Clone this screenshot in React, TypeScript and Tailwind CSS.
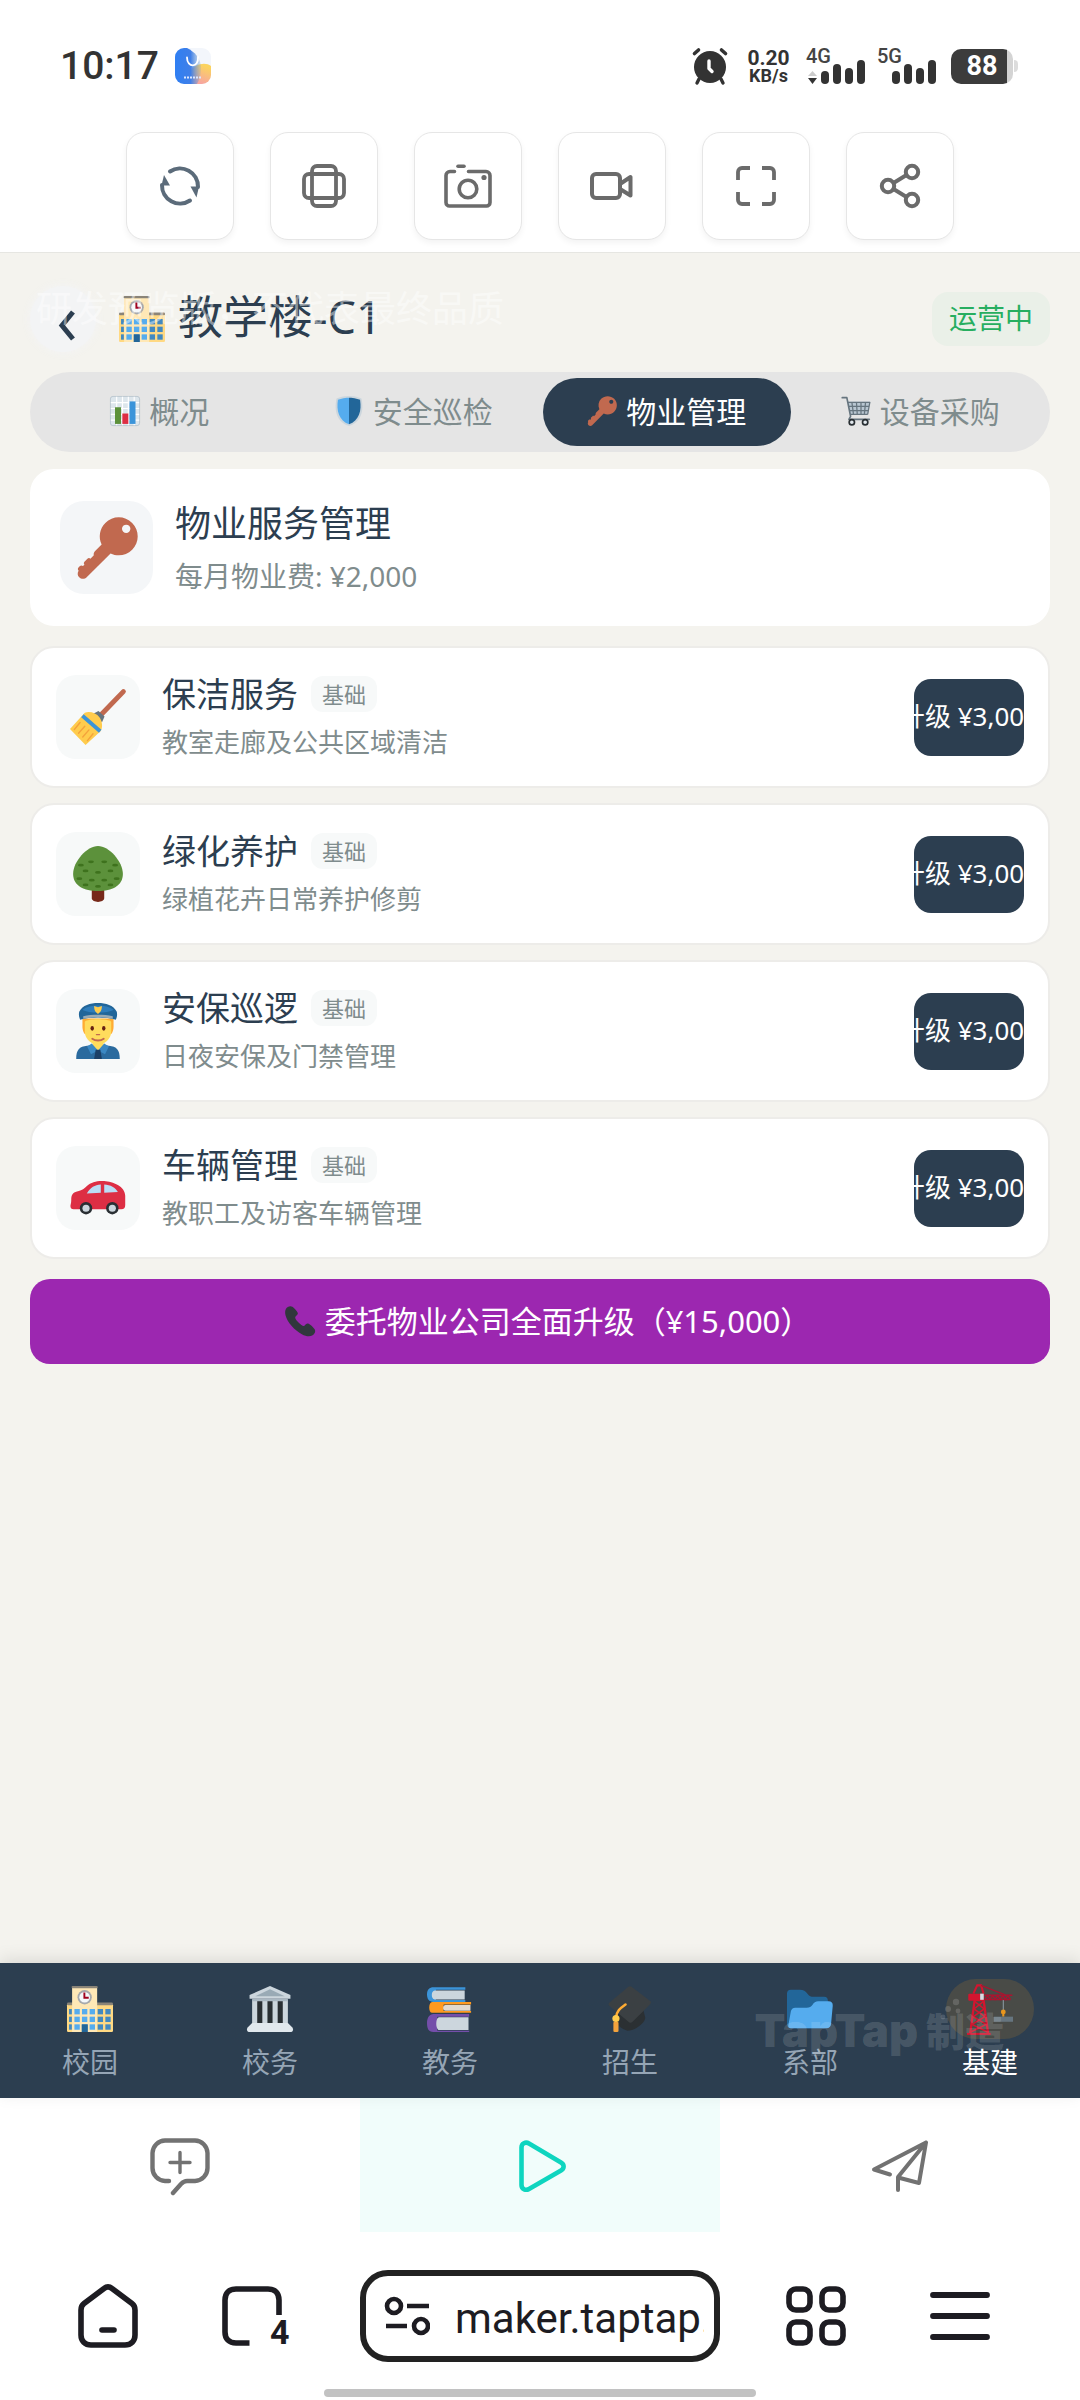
import { useState } from 'react';
import type { ReactNode } from 'react';

const ink = '#6b6b6b';

/* ---------- Emoji drawings (36 x 36 grid) ---------- */

const Emoji = ({ className, children }: { className: string; children: ReactNode }) => (
  <svg viewBox="0 0 36 36" className={`shrink-0 overflow-visible ${className}`} aria-hidden="true">
    {children}
  </svg>
);

const School = () => (
  <>
    <rect x="0" y="14" width="36" height="22" rx="1" fill="#FFD983" />
    <rect x="0" y="13" width="36" height="2" rx="1" fill="#8A8478" />
    <rect x="4" y="1" width="19.6" height="35" fill="#FFE8B6" />
    <rect x="3.6" y="0" width="20.4" height="1.8" rx=".8" fill="#8A8478" />
    <circle cx="13.8" cy="8.8" r="5.6" fill="#A7A9AC" />
    <circle cx="13.8" cy="8.8" r="4.2" fill="#F5F8FA" />
    <path d="M13.6 5v4.2H17" stroke="#A0041E" strokeWidth="1.5" fill="none" />
    {[18, 24, 30].map((y) => (
      <g key={y}>
        <rect x="1.6" y={y} width="2.2" height="4.2" fill="#4289C1" />
        <rect x="5.8" y={y} width="4.2" height="4.2" fill="#55ACEE" />
        <rect x="11.7" y={y} width="4.2" height="4.2" fill="#55ACEE" />
        <rect x="17.7" y={y} width="4.2" height="4.2" fill="#55ACEE" />
        <rect x="24" y={y} width="4.2" height="4.2" fill="#4289C1" />
        <rect x="30" y={y} width="4.2" height="4.2" fill="#4289C1" />
      </g>
    ))}
    <rect x="11.5" y="30" width="4.8" height="6" fill="#226699" />
  </>
);

const Chart = () => (
  <>
    <rect x=".5" y=".5" width="35" height="35" rx="3" fill="#DDE6EC" stroke="#B5C2CB" />
    <path d="M1 8h34M1 15h34M1 22h34M1 29h34M8 1v34M15 1v34M22 1v34M29 1v34" stroke="#fff" strokeWidth="1.4" />
    <rect x="6" y="13.5" width="7.2" height="20" fill="#5C913B" />
    <rect x="14.8" y="21" width="7.2" height="12.5" fill="#DD2E44" />
    <rect x="23.4" y="6.5" width="7.2" height="27" fill="#3B94D9" />
  </>
);

const Shield = () => (
  <>
    <path d="M33 3c-7-3-15-3-15-3S10 0 3 3C0 18 3 31 18 36c15-5 18-18 15-33z" fill="#CCD6DD" />
    <path d="M18 34C6 29.500 2.600 18 4.700 4.500 10.400 2 18 2 18 2z" fill="#55ACEE" />
    <path d="M18 34c12-4.500 15.400-16 13.300-29.500C25.600 2 18 2 18 2z" fill="#226699" />
  </>
);

const Key = () => (
  <path
    fill="#C1694F"
    d="M32.614 3.414C28.31-.89 21.332-.89 17.027 3.414c-3.391 3.392-4.098 8.439-2.144 12.535l-3.916 3.915c-.64.641-.841 1.543-.625 2.359l-1.973 1.972c-.479-.48-1.252-.48-1.731 0l-1.731 1.732c-.479.479-.479 1.253 0 1.732l-.867.864c-.479-.478-1.253-.478-1.731 0l-.866.867c-.479.479-.479 1.253 0 1.732.015.016.036.02.051.033-.794 1.189-.668 2.812.382 3.863 1.195 1.195 3.134 1.195 4.329 0L20.08 21.144c4.097 1.955 9.144 1.247 12.535-2.146 4.302-4.302 4.302-11.28-.001-15.584zm-1.731 5.195c-.957.957-2.509.957-3.464 0-.956-.956-.956-2.507 0-3.464.955-.956 2.507-.956 3.464 0 .956.957.956 2.508 0 3.464z"
  />
);

const Cart = () => (
  <>
    <path d="M8 7h27l-3 15H11z" fill="#B8C6D1" />
    <path d="M7.500 7.500H35M9 12.500h25M10 17.500h23M11 22h21M13 7l2 15M18.500 7l1 15M24 7v15M29.500 7l-1.500 15M34.700 7l-2.700 15" stroke="#66757F" strokeWidth="1.500" fill="none" />
    <path d="M1.500 2H7l4.500 22.500L9.500 28H34" stroke="#66757F" strokeWidth="2" fill="none" strokeLinecap="round" strokeLinejoin="round" />
    <circle cx="13" cy="31.500" r="3.200" fill="#E1E8ED" stroke="#292F33" strokeWidth="2" />
    <circle cx="29" cy="31.500" r="3.200" fill="#E1E8ED" stroke="#292F33" strokeWidth="2" />
  </>
);

const Broom = () => (
  <>
    <path d="M34.300 1.700L19.500 17" stroke="#C1694F" strokeWidth="3.200" strokeLinecap="round" />
    <path d="M18.300 14.200l3.900 3.400-1.600 3.800-6-5.400z" fill="#66757F" />
    <path d="M9.500 15.200c3.500-1 7.500.3 9.400 3 1.900 2.500 2.300 6.300.9 8.800L10 36 0 25.700z" fill="#FFCC4D" />
    <path d="M8.800 16.200l11.400 10-1.600 2L7.200 18.100z" fill="#3B94D9" />
    <path d="M6.500 21.500L2.800 26M9.500 24l-4 4.500M12.200 26.300l-4 4.600M14.800 28.800l-3.600 4.400" stroke="#F4A33C" strokeWidth=".9" strokeLinecap="round" />
  </>
);

const treeDots = [
  [11.500, 10.200], [20, 10.200], [5, 12.300], [27, 12.300], [8, 16], [16, 17], [24, 16],
  [4, 21], [12, 22], [20, 22], [28, 21], [8, 25], [16, 26], [24, 25],
];

const Tree = () => (
  <>
    <path d="M14 27h8v6.500c0 3.300-8 3.300-8 0z" fill="#77291A" />
    <path d="M18 0C11 0 2 10 2 18c0 7.500 7 11 16 11s16-3.500 16-11C34 10 25 0 18 0z" fill="#5C913B" />
    {treeDots.map(([x, y]) => (
      <ellipse key={`${x}-${y}`} cx={x + 2} cy={y} rx="1.900" ry=".9" fill="#3E721D" />
    ))}
  </>
);

const Officer = () => (
  <>
    <path d="M4 36c0-6 2-8 7-8.500l7-1 7 1c5 .5 7 2.500 7 8.500z" fill="#2A6A9E" />
    <path d="M14.500 24h7v4.500L18 31l-3.500-2.500z" fill="#FFDC5D" />
    <path d="M14 26l4 4.500-4.500 2.500-2.500-5zM22 26l-4 4.500 4.500 2.500 2.500-5z" fill="#3B88C3" />
    <path d="M16.500 30h3l1 6h-5z" fill="#1B3F66" />
    <path d="M8 10h20v5c0 3-1 4.500-1.600 5L9.600 20C9 19.500 8 18 8 15z" fill="#FFAC33" />
    <path d="M9.500 12c2-2 15-2 17 0v6.500c0 5-5 8.500-8.500 8.500s-8.500-3.500-8.500-8.500z" fill="#FFDC5D" />
    <ellipse cx="14.300" cy="16.300" rx="1.100" ry="1.500" fill="#662113" />
    <ellipse cx="21.700" cy="16.300" rx="1.100" ry="1.500" fill="#662113" />
    <path d="M17 20.300h2" stroke="#C1694F" strokeWidth=".9" strokeLinecap="round" />
    <path d="M14.300 23c2 1.500 5.400 1.500 7.400 0" stroke="#C1694F" strokeWidth="1.200" fill="none" strokeLinecap="round" />
    <path d="M6 5.500C8 1.500 13 0 18 0s10 1.500 12 5.500c.5 1.500.3 3.500-.5 5.200-6-1.800-17-1.800-23 0C5.700 9 5.500 7 6 5.500z" fill="#226699" />
    <path d="M8 4.300c5-3.500 15-3.500 20 0-4 2.500-16 2.500-20 0z" fill="#2F7DBB" />
    <path d="M8.500 8.500c6-1.200 13-1.200 19 0v1.700c-6-1.300-13-1.300-19 0z" fill="#99AAB5" />
    <path d="M15.500 2l2.500.8 2.500-.8c0 2-.5 4-2.500 5-2-1-2.500-3-2.500-5z" fill="#FFCC4D" />
  </>
);

const Car = () => (
  <>
    <path d="M.8 25.500c0-3 1-4.500 3.700-5.200 3.500-1 4-1.500 6-3.300C14 14 17 13.300 22 13.500c5.500.3 13.500 3.500 13.500 9.500v6c0 2-.8 2.700-2.500 2.700H2.300C1 31.700.3 31 .3 29.800c0-1.200.5-1.800.5-4.300z" fill="#DD2E44" />
    <path d="M10.800 21.500c2.500-3.800 5-5.500 9-5.700v5.200zM22 15.800c4 .2 7.300 2 8.800 4.800l-8.800.4z" fill="#BBDDF5" />
    <circle cx="10.300" cy="31" r="4" fill="#292F33" />
    <circle cx="10.300" cy="31" r="2.300" fill="#CCD6DD" />
    <circle cx="27.200" cy="31" r="4" fill="#292F33" />
    <circle cx="27.200" cy="31" r="2.300" fill="#CCD6DD" />
  </>
);

const Phone = () => (
  <path
    fill="#31373D"
    d="M1.200 3.200C2.500 1 6 -.6 8.600 1c2.300 1.500 4.900 4.800 6 6.600 1.200 2-1.300 3.600-2.500 4.800-.9 1 .3 3.400 3.300 6.600 3.200 3.200 6 5 7.100 4 1.300-1 2.800-3.500 5-2.300 2.200 1.200 5.300 4 6.900 6.300 1.500 2.300.2 5.500-2.300 7-3 1.800-7.600 1.500-12.500-1.200-4.500-2.500-8.400-5.600-11.800-9.600C3.900 18.600 1.600 14.600.6 10.600c-.8-3-.5-5.600.6-7.400z"
  />
);

const Museum = () => (
  <>
    <path d="M18 0L2 7v3h32V7z" fill="#CCD6DD" />
    <path d="M18 2.500L6.500 8h23z" fill="#99AAB5" />
    <rect x="4" y="11" width="28" height="19" fill="#292F33" />
    <path d="M4 11h4v18H4zM12 11h4v18h-4zM20 11h4v18h-4zM28 11h4v18h-4z" fill="#CCD6DD" />
    <path d="M4 10h28v2H4z" fill="#AAB8C2" />
    <path d="M4 29h28l3.500 3.500c1 1.200.5 3.500-1 3.500h-33C0 36-.5 33.700.5 32.500z" fill="#E1E8ED" />
  </>
);

const Books = () => (
  <>
    <path d="M5 1h25v2H7v8h23v1.500H5c-3.500 0-5-2.500-5-6S2 1 5 1z" fill="#3B94D9" />
    <path d="M6 3.500h23.500v7H6C3 10.500 3 3.500 6 3.500z" fill="#CCD6DD" />
    <path d="M4 12.500h30.500v2H13v5h21.500V21H4c-3 0-3-8.500 0-8.500z" fill="#FF9A1F" />
    <path d="M14.500 14.800H34v4.500H14.500c-2.500 0-2.500-4.500 0-4.500z" fill="#E1D9CF" />
    <path d="M5 22h28v2H8v11h25v1H5c-4 0-5-3-5-7s2-7 5-7z" fill="#744EAA" />
    <path d="M9.500 24.500h23v10h-23c-3 0-3-10 0-10z" fill="#CCD6DD" />
  </>
);

const GradCap = () => (
  <>
    <path d="M8 19l10 9 10-11 2 8c-1 5-9 10-14 10-4-1-8-4-8-7z" fill="#2B3033" />
    <path d="M16.500.7c1-.7 2-.7 3 0l14.300 11c.9.8.9 1.600 0 2.500L20 28c-1 .9-2.200.9-3.200 0L1.800 15.500c-.8-.8-.8-1.600 0-2.400z" fill="#3B4043" />
    <path d="M14.500 14.500C11 17 7.500 19 7 25" stroke="#FFAC33" strokeWidth="2" fill="none" strokeLinecap="round" />
    <circle cx="7" cy="25.500" r="2.800" fill="#FFCC4D" />
    <rect x="5" y="28" width="4" height="8" rx="1" fill="#F4A33C" />
  </>
);

const Folder = () => (
  <>
    <path d="M0 30V6c0-2 1-3 3-3h7c3 0 4.500 1 6 3s2.500 2.500 5 2.500h8c2 0 3 1 3 3V30c0 2-1 3-3 3H3c-2 0-3-1-3-3z" fill="#226699" />
    <path d="M1 31l2-11c.4-2 1.500-3 3.500-3h9c2 0 3.500-.7 4.500-2.300 1-1.700 2.400-2.700 4.500-2.700h8c2.300 0 3.500 1.300 3.300 3.500l-1.300 14c-.2 2.300-1.500 3.500-3.500 3.500H3c-1.500 0-2.200-.7-2-2z" fill="#55ACEE" />
  </>
);

const Crane = () => (
  <>
    <path d="M2.500 37L6 11h7l3.500 26" stroke="#D3152F" strokeWidth="1.800" fill="none" />
    <path d="M6 12l7.500 6-8.500 6 10 6-12 6M13 12l-7.500 6 8.500 6-10 6 12 6" stroke="#D3152F" strokeWidth="1.200" fill="none" />
    <path d="M0 37.500h18.500" stroke="#D3152F" strokeWidth="1.600" />
    <path d="M5 6l3-6.500h3L13 6" stroke="#D3152F" strokeWidth="1.600" fill="none" />
    <path d="M11-.5L30 7" stroke="#A91530" strokeWidth="1" />
    <path d="M13 7.200h22.500M13 10.600h21" stroke="#A91530" strokeWidth="1.200" />
    <path d="M14 10.500l2-3 2 3 2-3 2 3 2-3 2 3 2-3 2 3 2-3 2 3" stroke="#A91530" strokeWidth="1.200" fill="none" />
    <rect x="1" y="6" width="12" height="5.500" rx=".8" fill="#D3152F" />
    <rect x="10.300" y="6" width="2.800" height="4.800" fill="#D5DDE3" />
    <path d="M28.400 11v9" stroke="#99AAB5" strokeWidth=".7" />
    <circle cx="28.400" cy="20.300" r="1.900" fill="#E8961E" />
    <rect x="27.600" y="20" width="1.600" height="4" fill="#E8961E" />
    <rect x="21" y="24" width="15" height="4" fill="#66757F" />
  </>
);

/* ---------- Status bar ---------- */

const AppBadge = () => (
  <svg viewBox="0 0 36 36" className="size-9" aria-hidden="true">
    <defs>
      <linearGradient id="badgeWarm" x1="0.9" y1="0.2" x2="0.6" y2="1">
        <stop offset="0" stopColor="#fbd35f" />
        <stop offset="1" stopColor="#f7a6a0" />
      </linearGradient>
      <linearGradient id="badgeBlue" x1="0" y1="0" x2="1" y2="0">
        <stop offset="0" stopColor="#2f7ff3" />
        <stop offset="0.6" stopColor="#3f7fe8" />
        <stop offset="1" stopColor="#6f9fd0" stopOpacity="0.2" />
      </linearGradient>
      <clipPath id="badgeClip">
        <rect width="36" height="36" rx="9" />
      </clipPath>
    </defs>
    <g clipPath="url(#badgeClip)">
      <rect width="36" height="36" fill="#f3f6fb" />
      <path d="M16 36V22c3-5 14-9 20-4v18z" fill="url(#badgeWarm)" />
      <path d="M0 0h12c8 4 13 10 14 18 0 8-1 13-4 18H0z" fill="url(#badgeBlue)" />
      <path d="M12 9.500c0 10.500 12 10.500 11-.5" stroke="#fff" strokeWidth="1.800" fill="none" strokeLinecap="round" />
      <path d="M9 29.500h18" stroke="#dbe7ff" strokeWidth="2" strokeDasharray="2 1" />
    </g>
  </svg>
);

const AlarmIcon = () => (
  <svg viewBox="0 0 34 36" className="h-9 w-[34px] overflow-visible" aria-label="闹钟">
    <circle cx="17" cy="19" r="16" fill="#333" />
    <path d="M6 31l-2 4M28 31l2 4" stroke="#333" strokeWidth="3.400" strokeLinecap="round" />
    <path d="M1.500 5.500l4-3.500M32.500 5.500l-4-3.500" stroke="#333" strokeWidth="3.600" strokeLinecap="round" />
    <path d="M16 13v7.500l3 3" stroke="#fff" strokeWidth="3.400" fill="none" strokeLinecap="round" strokeLinejoin="round" />
  </svg>
);

const Signal = ({ label, arrows }: { label: string; arrows?: boolean }) => (
  <svg viewBox="0 0 60 36" className="h-9 w-[60px] overflow-visible font-['Roboto',sans-serif]">
    <text x="0" y="15" fontSize="20" fontWeight="500" fill="#444">
      {label}
    </text>
    {arrows && (
      <>
        <path d="M2 28l4.500-5 4.500 5z" fill="#ccc" />
        <path d="M2 30h9l-4.500 6z" fill="#333" />
      </>
    )}
    <rect x="15" y="23" width="8" height="13" rx="4" fill="#333" />
    <rect x="27" y="16" width="8" height="20" rx="4" fill="#333" />
    <rect x="39" y="20" width="8" height="16" rx="4" fill="#333" />
    <rect x="51" y="12" width="8" height="24" rx="4" fill="#333" />
  </svg>
);

const StatusBar = () => (
  <div className="flex h-9 items-center pr-[62px] pl-[60px] font-['Roboto',sans-serif] text-[#333]">
    <span className="text-[39px] leading-[38px] font-medium">10:17</span>
    <span className="ml-4">
      <AppBadge />
    </span>
    <div className="ml-auto flex items-center">
      <AlarmIcon />
      <div className="ml-5 flex w-[43px] flex-col items-center font-bold">
        <span className="text-[21px] leading-5">0.20</span>
        <span className="text-[18px] leading-4">KB/s</span>
      </div>
      <div className="ml-4 flex gap-[11px]">
        <Signal label="4G" arrows />
        <Signal label="5G" />
      </div>
      <div className="ml-[14px] flex items-center gap-px">
        <div className="flex h-[35px] w-[62px] items-center justify-center rounded-[10px] bg-linear-to-r from-[#3c3c3c] from-90% to-[#d4d4d4] to-90% text-[27px] font-bold text-white">
          88
        </div>
        <div className="h-3 w-1 rounded-r-sm bg-[#dcdcdc]" />
      </div>
    </div>
  </div>
);

/* ---------- Preview toolbar ---------- */

const toolbarItems = [
  {
    name: '刷新',
    icon: (
      <g stroke="#5b6b7a" fill="none" strokeWidth="4" strokeLinecap="round">
        <path d="M14 9.500A18 18 0 0 1 42 25" />
        <path d="M34 38.500A18 18 0 0 1 6 23" />
        <path d="M8 13l6 10.500H5.500z" fill="#5b6b7a" stroke="none" />
        <path d="M34.500 24.500h8.500l-2.500 11z" fill="#5b6b7a" stroke="none" />
      </g>
    ),
  },
  {
    name: '旋转',
    icon: (
      <g stroke={ink} fill="none" strokeWidth="3.800">
        <rect x="12" y="4" width="24" height="40" rx="5" />
        <rect x="4" y="12" width="40" height="24" rx="5" />
      </g>
    ),
  },
  {
    name: '截图',
    icon: (
      <g stroke={ink} fill="none" strokeWidth="3.600" strokeLinecap="round">
        <path d="M10.500 9.500H6a4 4 0 0 0-4 4v27a3.500 3.500 0 0 0 3.500 3.500h37a3.500 3.500 0 0 0 3.500-3.500v-27a4 4 0 0 0-4-4H24.500" />
        <path d="M14 4.200h6" />
        <circle cx="24" cy="27" r="8.800" />
        <circle cx="40" cy="15.500" r="2.600" fill={ink} stroke="none" />
      </g>
    ),
  },
  {
    name: '录屏',
    icon: (
      <g stroke={ink} fill="none" strokeWidth="4" strokeLinejoin="round">
        <rect x="4" y="12" width="28" height="24" rx="4" />
        <path d="M32 22l10.500-7v18.500L32 27" />
      </g>
    ),
  },
  {
    name: '全屏',
    icon: (
      <path
        d="M6 18V10a4 4 0 0 1 4-4h8M30 6h8a4 4 0 0 1 4 4v8M42 30v8a4 4 0 0 1-4 4h-8M18 42h-8a4 4 0 0 1-4-4v-8"
        stroke={ink}
        fill="none"
        strokeWidth="3.800"
      />
    ),
  },
  {
    name: '分享',
    icon: (
      <g stroke={ink} fill="none" strokeWidth="4">
        <circle cx="12" cy="24" r="6.200" />
        <circle cx="36" cy="10" r="6.200" />
        <circle cx="36" cy="38" r="6.200" />
        <path d="M17.500 21l13-8M17.500 27l13 8" />
      </g>
    ),
  },
];

const PreviewToolbar = () => (
  <div className="flex justify-center gap-9">
    {toolbarItems.map((item) => (
      <button
        key={item.name}
        aria-label={item.name}
        className="flex size-[108px] items-center justify-center rounded-[18px] border border-[#e6e6e6] bg-white shadow-[0_3px_6px_rgba(0,0,0,0.05)]"
      >
        <svg viewBox="0 0 48 48" className="size-12">
          {item.icon}
        </svg>
      </button>
    ))}
  </div>
);

/* ---------- Property page ---------- */

const tabs = [
  { name: '概况', icon: <Chart /> },
  { name: '安全巡检', icon: <Shield /> },
  { name: '物业管理', icon: <Key /> },
  { name: '设备采购', icon: <Cart /> },
];

const services = [
  { name: '保洁服务', desc: '教室走廊及公共区域清洁', icon: <Broom /> },
  { name: '绿化养护', desc: '绿植花卉日常养护修剪', icon: <Tree /> },
  { name: '安保巡逻', desc: '日夜安保及门禁管理', icon: <Officer /> },
  { name: '车辆管理', desc: '教职工及访客车辆管理', icon: <Car /> },
];

const navItems = [
  { name: '校园', icon: <School /> },
  { name: '校务', icon: <Museum /> },
  { name: '教务', icon: <Books /> },
  { name: '招生', icon: <GradCap /> },
  { name: '系部', icon: <Folder /> },
  { name: '基建', icon: <Crane /> },
];

const PageHeader = () => (
  <div className="relative flex h-[66px] items-center">
    <button
      aria-label="返回"
      className="flex size-[66px] items-center justify-center rounded-full bg-[#f3f4f5] shadow-[0_0_8px_rgba(243,244,246,0.9)]"
    >
      <svg viewBox="0 0 66 66" className="size-full">
        <path d="M43 26L32 39.500 43 53" stroke="#2c3e50" strokeWidth="5" fill="none" />
      </svg>
    </button>
    <Emoji className="ml-[23px] size-[46px]">
      <School />
    </Emoji>
    <h1 className="ml-[13px] pb-1 text-[45px] leading-[60px] text-[#2c3e50]">教学楼-C1</h1>
    <span className="ml-auto rounded-2xl bg-[#eaf0e8] px-[17px] pb-0.5 text-[28px] leading-[52px] text-[#27ae60]">运营中</span>
    {/* Preview notice floats over the title */}
    <p className="pointer-events-none absolute -top-0.5 left-1.5 text-[36px] leading-[50px] whitespace-nowrap text-white/45">
      研发预览版，不代表最终品质
    </p>
  </div>
);

const TabBar = () => {
  const [active, setActive] = useState('物业管理');

  return (
    <div className="mt-5 flex gap-1.5 rounded-full bg-[#e5e5e5] p-1.5">
      {tabs.map((tab) => (
        <button
          key={tab.name}
          onClick={() => setActive(tab.name)}
          className={`flex h-[68px] flex-1 items-center justify-center gap-[9px] rounded-full pb-0.5 text-[30px] ${
            active === tab.name ? 'bg-[#2c3e50] text-white' : 'text-[#7f8c8d]'
          }`}
        >
          <Emoji className="size-[30px]">{tab.icon}</Emoji>
          {tab.name}
        </button>
      ))}
    </div>
  );
};

const SummaryCard = () => (
  <section className="mt-[17px] flex items-center gap-[22px] rounded-3xl bg-white px-[30px] py-[26px]">
    <div className="flex size-[93px] shrink-0 items-center justify-center rounded-3xl bg-[#f4f6f8]">
      <Emoji className="size-[62px]">
        <Key />
      </Emoji>
    </div>
    <div>
      <h2 className="text-[36px] leading-[57px] text-[#2c3e50]">物业服务管理</h2>
      <p className="text-[28px] leading-[48px] text-[#7f8c8d]">每月物业费: ¥2,000</p>
    </div>
  </section>
);

const ServiceCard = ({ name, desc, icon }: { name: string; desc: string; icon: ReactNode }) => (
  <li className="flex items-center gap-[22px] rounded-3xl border-2 border-[#edece9] bg-white px-6 py-[21px]">
    <div className="flex size-[84px] shrink-0 items-center justify-center rounded-[20px] bg-[#f7f9f9]">
      <Emoji className="size-14">{icon}</Emoji>
    </div>
    <div className="min-w-0 flex-1">
      <div className="flex items-center gap-[13px]">
        <h3 className="text-[34px] leading-[50px] text-[#2c3e50]">{name}</h3>
        <span className="rounded-xl bg-[#f7f9f9] px-[11px] text-[22px] leading-9 text-[#7f8c8d]">基础</span>
      </div>
      <p className="text-[26px] leading-[46px] text-[#7f8c8d]">{desc}</p>
    </div>
    <button className="flex h-[77px] w-[110px] shrink-0 items-center justify-center overflow-hidden rounded-[17px] bg-[#2c3e50] pb-0.5 text-[26px] whitespace-nowrap text-white">
      <span className="shrink-0">升级 ¥3,000</span>
    </button>
  </li>
);

const BottomNav = () => (
  <nav className="relative flex bg-[#2c3e50] pt-4 pb-3 shadow-[0_-4px_16px_rgba(0,0,0,0.1)]">
    {navItems.map((item) => {
      const isActive = item.name === '基建';
      return (
        <a key={item.name} href="#" className="flex flex-1 flex-col items-center">
          <span
            className={`flex h-[60px] w-[88px] items-center justify-center rounded-full ${
              isActive ? 'bg-[#f39c12]/15' : ''
            }`}
          >
            <Emoji className="size-[46px]">{item.icon}</Emoji>
          </span>
          <span className={`text-[28px] leading-[47px] ${isActive ? 'text-white' : 'text-[#95a5b5]'}`}>{item.name}</span>
        </a>
      );
    })}
    <div className="pointer-events-none absolute top-[38px] right-[76px] flex items-center gap-2 font-black whitespace-nowrap text-white/15">
      <span className="font-['Inter',sans-serif] text-[45px] leading-[60px]">TapTap</span>
      <span className="text-[39px] leading-[60px]">制造</span>
      <svg viewBox="0 0 30 26" className="absolute -top-1 right-9 h-[26px] w-[30px]" fill="currentColor" aria-hidden="true">
        <circle cx="18" cy="5" r="3.200" />
        <circle cx="10" cy="12" r="3" />
        <circle cx="20" cy="14" r="2.400" />
        <circle cx="5" cy="20" r="2.400" />
      </svg>
    </div>
  </nav>
);

/* ---------- Maker actions and browser chrome ---------- */

const MakerBar = () => (
  <div className="flex h-[134px]">
    <button aria-label="评论" className="flex flex-1 items-center justify-center">
      <svg viewBox="0 0 62 62" className="size-[62px]" fill="none" stroke="#727272" strokeLinecap="round" strokeLinejoin="round">
        <path d="M20 47h-4A13 13 0 0 1 3.500 34V19A13 13 0 0 1 16 6.500h30A13 13 0 0 1 58.500 19v15A13 13 0 0 1 46 47H38c-3 0-4 1-6 3l-8 9" strokeWidth="4.400" />
        <path d="M31 18.500v20M21 28.500h20" strokeWidth="3.400" />
      </svg>
    </button>
    <button aria-label="运行" className="flex flex-1 items-center justify-center bg-[#f1fdfb]">
      <svg viewBox="-5 -1 54 54" className="size-[54px]" fill="none" stroke="#0fd5bf" strokeWidth="4.600" strokeLinejoin="round">
        <path d="M3.500 8.500c0-4 4-6 7.500-4L43 23.500c3.500 2 3.500 6 0 8L11 50c-3.500 2-7.500 0-7.500-4z" />
      </svg>
    </button>
    <button aria-label="发布" className="flex flex-1 items-center justify-center">
      <svg viewBox="0 0 60 54" className="h-[54px] w-[60px]" fill="none" stroke="#727272" strokeWidth="4" strokeLinecap="round" strokeLinejoin="round">
        <path d="M20 36.500L4 31.500 56 4.500 49 45 28 39.500v12.500M28 39L56 4.500" />
      </svg>
    </button>
  </div>
);

const BrowserBar = () => (
  <div className="flex items-center pt-[38px] pr-[90px] pl-[78px] font-['Roboto',sans-serif] text-[#1d1c22]">
    <button aria-label="主页">
      <svg viewBox="0 0 60 64" className="h-16 w-[60px]" fill="none" stroke="currentColor" strokeWidth="5.600" strokeLinecap="round" strokeLinejoin="round">
        <path d="M3 26c0-3 1-5 3-6.500L26 4.500c2.500-2 5.500-2 8 0L54 19.500c2 1.500 3 3.500 3 6.500v25c0 6-4 10-10 10H13C7 61 3 57 3 51z" />
        <path d="M24 46h12" />
      </svg>
    </button>
    <button aria-label="标签页" className="ml-[84px] flex items-end">
      <svg viewBox="0 0 60 60" className="size-[60px]" fill="none" stroke="currentColor" strokeWidth="5.600">
        <path d="M27.500 57H14C7 57 3 53 3 46V14C3 7 7 3 14 3h32c7 0 11 4 11 11v15" />
      </svg>
      <span className="-mb-1 -ml-[12px] w-6 text-left text-[34px] leading-9 font-bold">4</span>
    </button>
    <button className="mx-[66px] flex h-[92px] min-w-0 flex-1 items-center overflow-hidden rounded-[28px] border-[6px] border-[#222] pl-[18px]">
      <svg viewBox="0 0 46 42" className="h-[42px] w-[46px] shrink-0" fill="none" stroke="currentColor" strokeWidth="4.600">
        <circle cx="10" cy="11" r="7" />
        <path d="M23 11h22M2 31h21" />
        <circle cx="37" cy="31" r="7" />
      </svg>
      <span className="ml-[25px] w-[249px] overflow-hidden pt-1.5 text-left text-[42px] leading-[60px] whitespace-nowrap">maker.taptap.cn</span>
    </button>
    <button aria-label="应用">
      <svg viewBox="0 0 60 60" className="size-[60px]" fill="none" stroke="currentColor" strokeWidth="5.600">
        <rect x="3" y="3" width="21" height="21" rx="7" />
        <rect x="36" y="3" width="21" height="21" rx="7" />
        <rect x="3" y="36" width="21" height="21" rx="7" />
        <rect x="36" y="36" width="21" height="21" rx="7" />
      </svg>
    </button>
    <button aria-label="菜单" className="ml-[84px]">
      <svg viewBox="0 0 60 60" className="size-[60px]" stroke="currentColor" strokeWidth="5.800" strokeLinecap="round">
        <path d="M3 9h54M3 30h54M3 51h54" />
      </svg>
    </button>
  </div>
);

const App = () => {
  return (
    <div className="flex min-h-screen flex-col bg-white font-['Noto_Sans','Noto_Sans_CJK_SC',sans-serif]">
      <header className="flex flex-col gap-12 border-b border-[#e6e6e2] pt-12 pb-3">
        <StatusBar />
        <PreviewToolbar />
      </header>

      <main className="flex-1 bg-[#f4f3ee] px-[30px] pt-[33px] pb-8">
        <PageHeader />
        <TabBar />
        <SummaryCard />
        <ul className="mt-5 flex flex-col gap-[15px]">
          {services.map((service) => (
            <ServiceCard key={service.name} {...service} />
          ))}
        </ul>
        <button className="mt-5 flex h-[85px] w-full items-center justify-center gap-[9px] rounded-[20px] bg-[#9c27b0] pl-4 text-[31px] text-white">
          <Emoji className="size-[31px]">
            <Phone />
          </Emoji>
          委托物业公司全面升级（¥15,000）
        </button>
      </main>

      <BottomNav />
      <MakerBar />
      <BrowserBar />
      <div className="mx-auto mt-[27px] mb-[3px] h-2 w-2/5 rounded-full bg-[#c2c2c2]" />
    </div>
  );
};

export default App;
